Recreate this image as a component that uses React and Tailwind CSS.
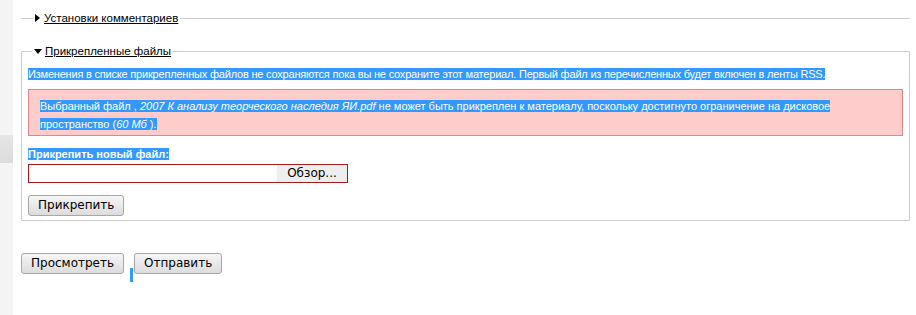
import React from "react";

const btn =
  "rounded-[3px] border border-[#a7a7a7] bg-gradient-to-b from-[#f6f6f6] to-[#dcdcdc] text-[12px] leading-[15px] text-black pt-[2px] pb-[2px] font-['DejaVu_Sans',sans-serif]";

function ArrowRight() {
  return (
    <svg width="5" height="8" viewBox="0 0 5 8" className="inline-block mr-[4px] align-[-0px]">
      <path d="M0 0 L5 4 L0 8 Z" fill="#000" />
    </svg>
  );
}
function ArrowDown() {
  return (
    <svg width="8" height="5" viewBox="0 0 8 5" className="inline-block mr-[3px] align-[1px]">
      <path d="M0 0 L8 0 L4 5 Z" fill="#000" />
    </svg>
  );
}

export default function App() {
  return (
    <div className="flex w-[916px] h-[315px] bg-white overflow-hidden font-['Liberation_Sans',Arial,sans-serif]">
      <div className="w-[13px] shrink-0 bg-[#f4f4f4] flex flex-col">
        <div className="h-[135px]" />
        <div className="h-[28px] bg-gradient-to-b from-[#e6e6e6] to-[#dcdcdc]" />
      </div>
      <div className="ml-[8px] w-[889px] flex flex-col">
        <fieldset className="mt-[12px] border-t border-[#cccccc] pl-[12px] min-w-0">
          <legend className="px-[2px] text-[11.5px] leading-[13px]">
            <ArrowRight />
            <span className="underline">Установки комментариев</span>
          </legend>
        </fieldset>
        <fieldset className="mt-[20px] border border-[#cccccc] px-[6px] pb-[4px] min-w-0">
          <legend className="ml-[4px] px-[2px] text-[11.5px] leading-[13px]">
            <ArrowDown />
            <span className="underline">Прикрепленные файлы</span>
          </legend>
          <div className="mt-[10px] text-[11px] leading-[12px] tracking-[-0.2px]">
            <span className="bg-[#3399ff] text-white">
              Изменения в списке прикрепленных файлов не сохраняются пока вы не сохраните этот материал. Первый файл из перечисленных будет включен в ленты RSS.
            </span>
          </div>
          <div className="mt-[9px] border border-[#dd8888] bg-[#ffcccc] px-[11px] pt-[7px] pb-[2px] text-[11px] leading-[18px]">
            <span className="bg-[#3399ff] text-white">
              Выбранный файл , <em>2007 К анализу теорческого наследия ЯИ.pdf</em> не может быть прикреплен к материалу, поскольку достигнуто ограничение на дисковое пространство (<em>60 Мб</em> ).
            </span>
          </div>
          <div className="mt-[12px] text-[11px] leading-[13px] font-bold">
            <span className="bg-[#3399ff] text-white">Прикрепить новый файл:</span>
          </div>
          <div className="mt-[3px] w-[320px] h-[19px] border border-[#a61c1c] flex">
            <div className="flex-1 bg-white" />
            <div className="w-[70px] bg-[#eeeeee] text-[12px] leading-[17px] text-center font-['DejaVu_Sans',sans-serif]">
              Обзор...
            </div>
          </div>
          <div className="mt-[12px] flex">
            <button className={btn + " px-[9px]"}>Прикрепить</button>
          </div>
        </fieldset>
        <div className="mt-[32px] flex items-start">
          <button className={btn + " px-[9px]"}>Просмотреть</button>
          <div className="ml-[6px] mt-[15px] w-[3px] h-[14px] bg-[#3399ff]" />
          <button className={btn + " ml-[1px] px-[9px]"}>Отправить</button>
        </div>
      </div>
    </div>
  );
}
